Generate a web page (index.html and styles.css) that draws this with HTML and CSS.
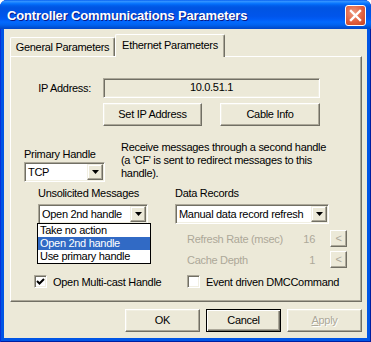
FILE: index.html
```html
<!DOCTYPE html>
<html>
<head>
<meta charset="utf-8">
<title>Controller Communications Parameters</title>
<link rel="stylesheet" href="styles.css">
</head>
<body>
<div class="window">
  <div class="titlebar">
    <span class="title">Controller Communications Parameters</span>
    <span class="close">
      <svg width="19" height="19" viewBox="0 0 19 19"><path d="M5 5 L14 14 M14 5 L5 14" stroke="#fff" stroke-width="2.4" stroke-linecap="square" fill="none"/></svg>
    </span>
  </div>
  <div class="client">
    <div class="tabs">
      <div class="tab">General Parameters</div>
      <div class="tab active">Ethernet Parameters</div>
    </div>
    <div class="panel">
      <div class="ip-row">
        <span class="ip-label">IP Address:</span>
        <div class="field">10.0.51.1</div>
      </div>
      <div class="ip-buttons">
        <div class="btn w-setip">Set IP Address</div>
        <div class="btn w-cable">Cable Info</div>
      </div>
      <div class="handle-row">
        <div class="handle-col">
          <div class="lbl">Primary Handle</div>
          <div class="combo combo-tcp">
            <span class="combo-text">TCP</span>
            <span class="combo-btn"><svg width="7" height="4" viewBox="0 0 7 4"><path d="M0 0 H7 L3.5 4 Z" fill="#000"/></svg></span>
          </div>
        </div>
        <p class="desc">Receive messages through a second handle<br>(a 'CF' is sent to redirect messages to this<br>handle).</p>
      </div>
      <div class="msg-row">
        <div class="msg-col">
          <div class="lbl">Unsolicited Messages</div>
          <div class="combo combo-unsol">
            <span class="combo-text">Open 2nd handle</span>
            <span class="combo-btn"><svg width="7" height="4" viewBox="0 0 7 4"><path d="M0 0 H7 L3.5 4 Z" fill="#000"/></svg></span>
            <ul class="droplist">
              <li>Take no action</li>
              <li class="sel">Open 2nd handle</li>
              <li>Use primary handle</li>
            </ul>
          </div>
        </div>
        <div class="data-col">
          <div class="lbl">Data Records</div>
          <div class="combo combo-data">
            <span class="combo-text">Manual data record refresh</span>
            <span class="combo-btn"><svg width="7" height="4" viewBox="0 0 7 4"><path d="M0 0 H7 L3.5 4 Z" fill="#000"/></svg></span>
          </div>
          <div class="param-row first">
            <span class="param-lbl">Refresh Rate (msec)</span>
            <span class="param-val">16</span>
            <span class="mini-btn">&lt;</span>
          </div>
          <div class="param-row">
            <span class="param-lbl">Cache Depth</span>
            <span class="param-val">1</span>
            <span class="mini-btn">&lt;</span>
          </div>
        </div>
      </div>
      <div class="check-row">
        <label class="check check-left">
          <span class="box checked"><svg width="9" height="9" viewBox="0 0 9 9"><path d="M1 4 L3.5 6.5 L8 2" stroke="#000" stroke-width="2" fill="none"/></svg></span>
          <span>Open Multi-cast Handle</span>
        </label>
        <label class="check">
          <span class="box"></span>
          <span>Event driven DMCCommand</span>
        </label>
      </div>
    </div>
    <div class="footer">
      <div class="btn w-foot">OK</div>
      <div class="btn w-foot default">Cancel</div>
      <div class="btn w-foot disabled"><u>A</u>pply</div>
    </div>
  </div>
</div>
</body>
</html>
```

FILE: styles.css
```css
* { box-sizing: border-box; }
html, body { margin: 0; padding: 0; }
body {
  width: 371px;
  height: 342px;
  overflow: hidden;
  background: #fff;
  font-family: "Liberation Sans", Arial, sans-serif;
  font-size: 11px;
  letter-spacing: -0.3px;
  color: #000;
}
.window {
  width: 371px;
  height: 342px;
  background: #0055E5;
  border-radius: 7px 7px 0 0;
  display: flex;
  flex-direction: column;
  padding: 0 4px 4px;
  box-shadow: inset 1px 0 #0831D9, inset -1px 0 #001EA0, inset 0 -1px #001EA0;
}
.titlebar {
  height: 29px;
  margin: 0 -4px;
  padding: 2px 5px 0 7px;
  display: flex;
  align-items: center;
  justify-content: space-between;
  border-radius: 7px 7px 0 0;
  background: linear-gradient(to bottom, #0058EE 0%, #3593FF 4%, #288EFF 7%, #127DFF 10%, #036FFC 14%, #0262EE 18%, #0057E5 24%, #0054E3 30%, #0055EB 56%, #005BF5 66%, #026AFE 76%, #0062EF 86%, #0052D6 94%, #0046C8 100%);
}
.title {
  font-weight: bold;
  font-size: 13px;
  letter-spacing: -0.15px;
  color: #fff;
  text-shadow: 1px 1px #0A1883;
  white-space: nowrap;
}
.close {
  width: 21px;
  height: 21px;
  border: 1px solid #fff;
  border-radius: 3px;
  background: radial-gradient(circle at 40% 35%, #EE9A80 0%, #E0603F 55%, #C5401F 100%);
  display: flex;
  align-items: center;
  justify-content: center;
}
.close svg { display: block; }
.client {
  flex: 1;
  background: #ECE9D8;
  padding: 5px 5px 0 6px;
  display: flex;
  flex-direction: column;
}
.tabs {
  height: 22px;
  display: flex;
  align-items: flex-end;
}
.tab {
  height: 19px;
  width: 105px;
  border-top: 1px solid #fff;
  border-left: 1px solid #fff;
  border-right: 1px solid #716F64;
  box-shadow: inset -1px 0 #ACA899;
  border-radius: 2px 2px 0 0;
  background: #ECE9D8;
  text-align: center;
  line-height: 18px;
  white-space: nowrap;
}
.tab.active {
  position: relative;
  z-index: 1;
  width: 110px;
  height: 23px;
  margin-bottom: -1px;
  line-height: 20px;
}
.panel {
  height: 246px;
  border-top: 1px solid #fff;
  border-left: 1px solid #fff;
  border-right: 1px solid #716F64;
  border-bottom: 1px solid #716F64;
  box-shadow: inset -1px -1px #ACA899;
  background: #ECE9D8;
}
.ip-row {
  margin-top: 21px;
  height: 20px;
  display: flex;
  align-items: center;
}
.ip-label {
  width: 80px;
  margin-right: 12px;
  text-align: right;
}
.field {
  width: 217px;
  height: 20px;
  text-align: center;
  line-height: 16px;
  border-top: 1px solid #ACA899;
  border-left: 1px solid #ACA899;
  border-right: 1px solid #fff;
  border-bottom: 1px solid #fff;
  box-shadow: inset 1px 1px #716F64, inset -1px -1px #F1EFE2;
  background: #ECE9D8;
}
.ip-buttons {
  margin: 5px 0 0 92px;
  display: flex;
  gap: 18px;
}
.btn {
  height: 23px;
  border-top: 1px solid #fff;
  border-left: 1px solid #fff;
  border-right: 1px solid #716F64;
  border-bottom: 1px solid #716F64;
  box-shadow: inset -1px -1px #ACA899, inset 1px 1px #F1EFE2;
  background: #ECE9D8;
  text-align: center;
  line-height: 21px;
  white-space: nowrap;
}
.w-setip { width: 99px; }
.w-cable { width: 100px; }
.handle-row {
  margin-top: 15px;
  display: flex;
}
.handle-col {
  margin-left: 13px;
  width: 97px;
  padding-top: 7px;
}
.lbl {
  line-height: 13px;
  height: 13px;
  white-space: nowrap;
}
.desc {
  margin: 0;
  line-height: 13px;
  white-space: nowrap;
}
.combo {
  position: relative;
  height: 20px;
  margin-top: 1px;
  display: flex;
  align-items: center;
  background: #fff;
  border-top: 1px solid #ACA899;
  border-left: 1px solid #ACA899;
  border-right: 1px solid #fff;
  border-bottom: 1px solid #fff;
  box-shadow: inset 1px 1px #716F64, inset -1px -1px #F1EFE2;
  padding: 1px;
}
.combo-text {
  flex: 1;
  padding-left: 2px;
  white-space: nowrap;
  overflow: hidden;
}
.combo-btn {
  width: 16px;
  height: 16px;
  display: flex;
  align-items: center;
  justify-content: center;
  background: #ECE9D8;
  border-top: 1px solid #F1EFE2;
  border-left: 1px solid #F1EFE2;
  border-right: 1px solid #716F64;
  border-bottom: 1px solid #716F64;
  box-shadow: inset -1px -1px #ACA899, inset 1px 1px #fff;
}
.combo-btn svg { display: block; }
.combo-tcp { width: 81px; }
.msg-row {
  margin-top: 5px;
  display: flex;
}
.msg-col {
  margin-left: 27px;
  width: 137px;
}
.data-col {
  width: 172px;
}
.combo-unsol { width: 110px; margin-top: 4px; }
.combo-data { width: 154px; margin-top: 4px; }
.droplist {
  position: absolute;
  left: -2px;
  top: 18px;
  width: 114px;
  margin: 0;
  padding: 0;
  list-style: none;
  background: #fff;
  border: 1px solid #000;
  z-index: 2;
}
.droplist li {
  height: 13px;
  line-height: 13px;
  padding-left: 2px;
  white-space: nowrap;
}
.droplist li.sel {
  background: #316AC5;
  color: #fff;
}
.param-row {
  margin-top: 4px;
  height: 17px;
  display: flex;
  align-items: center;
  color: #ACA899;
}
.param-row.first { margin-top: 6px; }
.param-lbl {
  margin-left: 12px;
  width: 115px;
  white-space: nowrap;
}
.param-val {
  width: 13px;
  text-align: right;
}
.mini-btn {
  margin-left: 15px;
  width: 17px;
  height: 17px;
  border-top: 1px solid #fff;
  border-left: 1px solid #fff;
  border-right: 1px solid #716F64;
  border-bottom: 1px solid #716F64;
  box-shadow: inset -1px -1px #ACA899;
  background: #ECE9D8;
  text-align: center;
  line-height: 15px;
  color: #ACA899;
}
.check-row {
  margin-top: 7px;
  display: flex;
  height: 13px;
}
.check {
  display: flex;
  align-items: center;
  gap: 6px;
  white-space: nowrap;
}
.check-left {
  margin-left: 23px;
  width: 153px;
}
.box {
  width: 13px;
  height: 13px;
  flex: none;
  background: #fff;
  border-top: 1px solid #ACA899;
  border-left: 1px solid #ACA899;
  border-right: 1px solid #fff;
  border-bottom: 1px solid #fff;
  box-shadow: inset 1px 1px #716F64, inset -1px -1px #F1EFE2;
  display: flex;
  align-items: center;
  justify-content: center;
}
.box svg { display: block; }
.footer {
  margin-top: 7px;
  display: flex;
  justify-content: flex-end;
  gap: 6px;
}
.w-foot { width: 75px; }
.btn.default {
  border: 1px solid #000;
  box-shadow: inset 1px 1px #fff, inset -1px -1px #716F64, inset -2px -2px #ACA899;
}
.btn.disabled {
  color: #ACA899;
  text-shadow: 1px 1px #fff;
}
```
